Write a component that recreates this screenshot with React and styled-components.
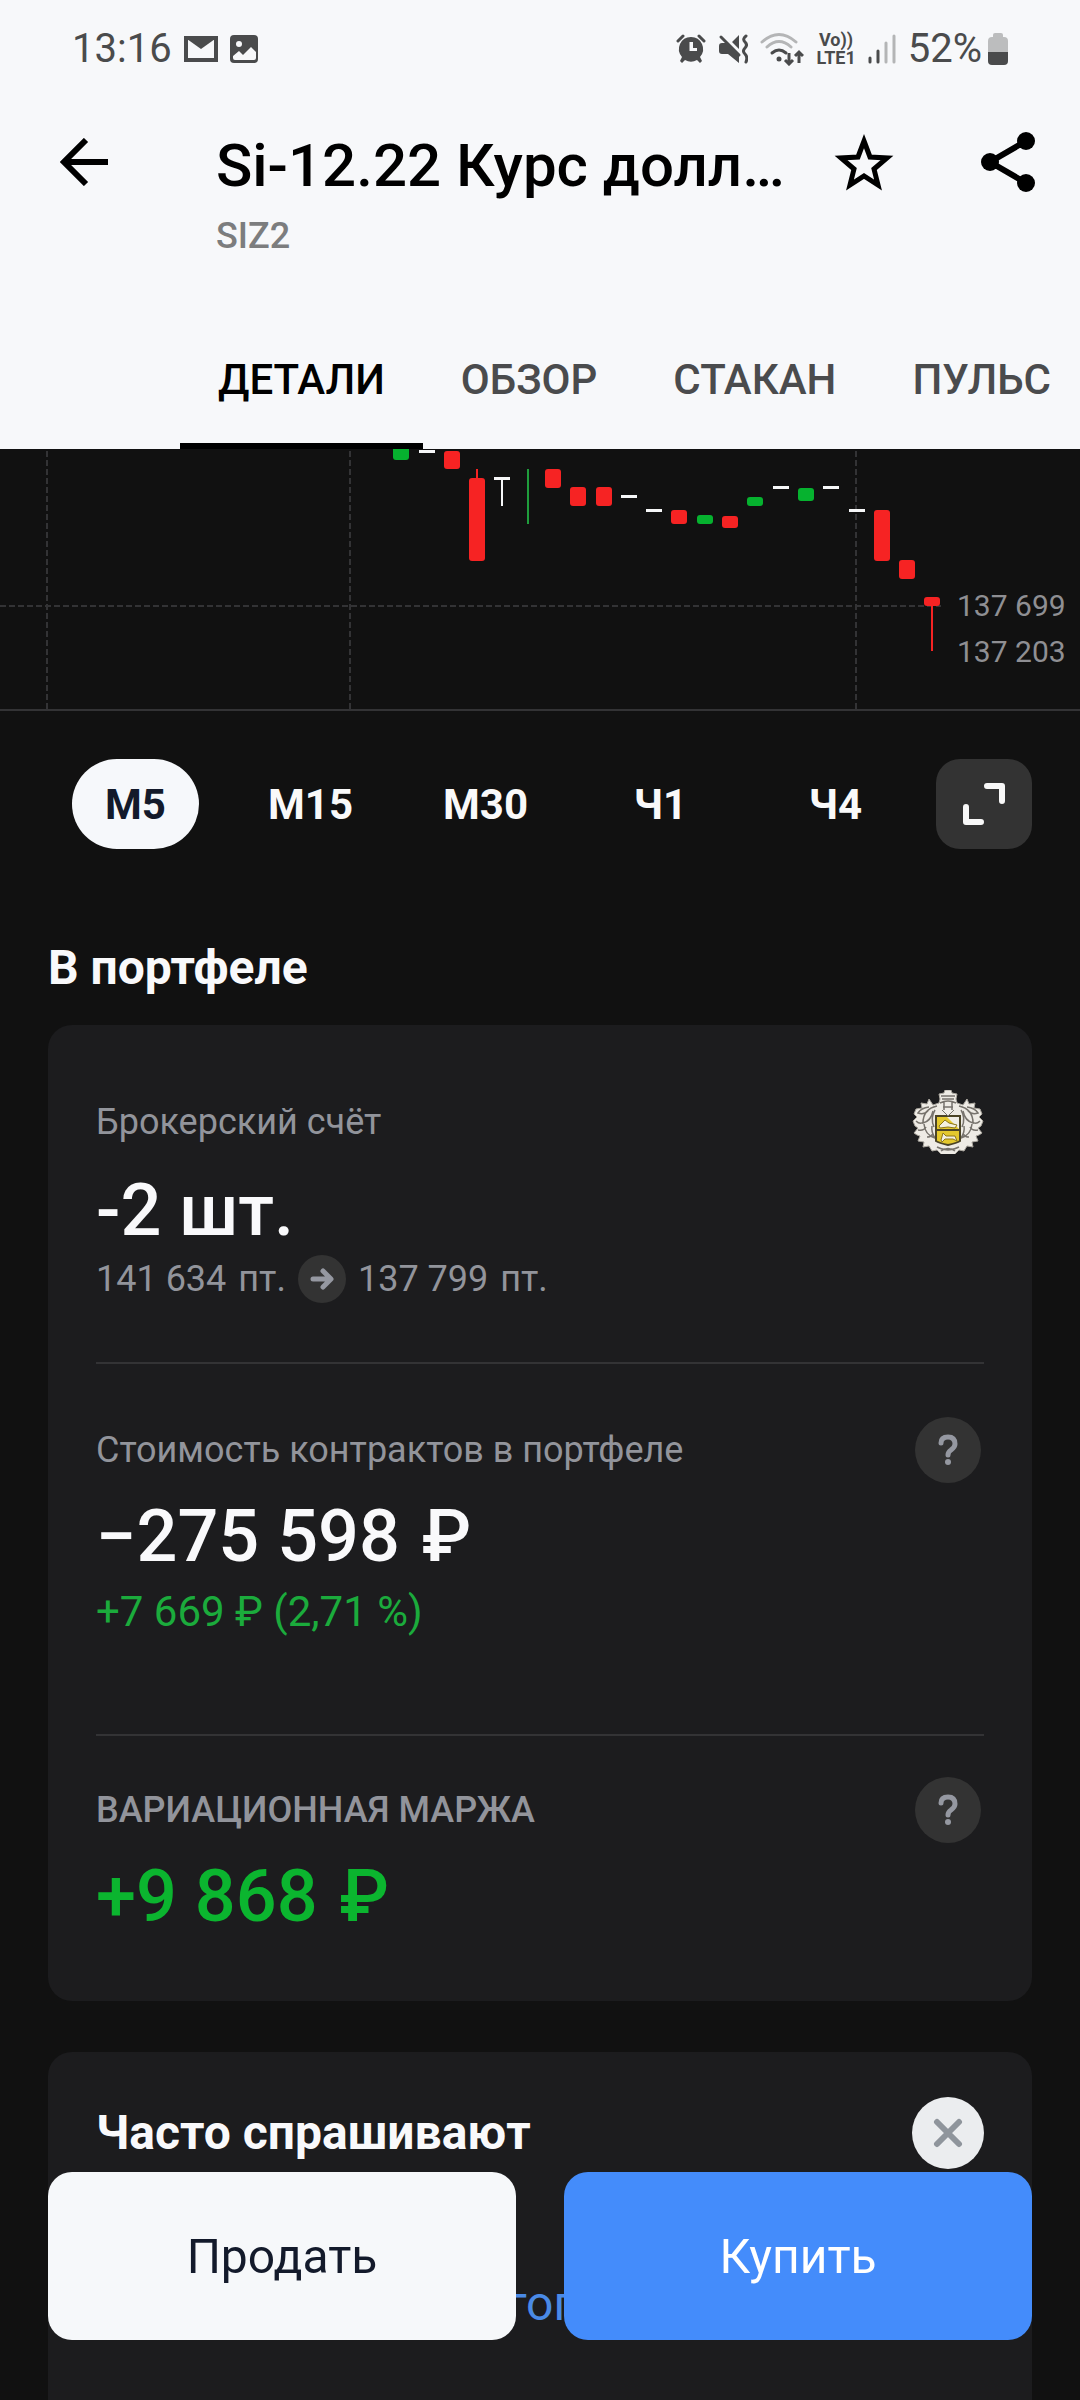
import React, { useState } from "react";
import styled, { createGlobalStyle } from "styled-components";

const tabs = ["ДЕТАЛИ", "ОБЗОР", "СТАКАН", "ПУЛЬС"];
const timeframes = ["М5", "М15", "М30", "Ч1", "Ч4"];

// [x, body top, body bottom, kind, wick top, wick bottom]
const candles = [
  [401, -6, 11, "up"],
  [427, 2, 2, "flat"],
  [452, 2, 20, "down"],
  [477, 29, 112, "down", 20, 29],
  [502, 29, 29, "flat", 29, 57],
  [528, 20, 20, "wick", 20, 75],
  [553, 20, 39, "down"],
  [578, 38, 57, "down"],
  [604, 38, 57, "down"],
  [629, 47, 47, "flat"],
  [654, 61, 61, "flat"],
  [679, 61, 75, "down"],
  [705, 66, 75, "up"],
  [730, 67, 79, "down"],
  [755, 48, 57, "up"],
  [781, 38, 38, "flat"],
  [806, 39, 52, "up"],
  [831, 38, 38, "flat"],
  [857, 61, 61, "flat"],
  [882, 61, 112, "down"],
  [907, 111, 130, "down"],
  [932, 148, 157, "down", 157, 202],
];

const candleColors = {
  up: "#06b22f",
  wick: "#1f9d3c",
  down: "#f62323",
  flat: "#f6f7f8",
};

const CandleChart = () => (
  <ChartSvg viewBox="0 0 1080 260" role="img" aria-label="График цены">
    <g stroke="#333335" strokeWidth="2" strokeDasharray="6 3">
      <path d="M47 2V260M350 2V260M856 2V260M0 157H941" />
    </g>
    {candles.map(([x, top, bottom, kind, wickTop, wickBottom]) => (
      <g key={x} fill={candleColors[kind]}>
        {wickBottom && (
          <rect x={x - 1} y={wickTop} width="2" height={wickBottom - wickTop} />
        )}
        {kind === "flat" && <rect x={x - 8} y={top - 1} width="16" height="3" />}
        {(kind === "up" || kind === "down") && (
          <rect x={x - 8} y={top} width="16" height={bottom - top} rx="3" />
        )}
      </g>
    ))}
    <PriceText x="957" y="167">
      137 699
    </PriceText>
    <PriceText x="957" y="213">
      137 203
    </PriceText>
  </ChartSvg>
);

const StatusIcons = () => (
  <StatusGroup>
    {/* alarm */}
    <svg width="30" height="30" viewBox="0 0 30 30" fill="#4a4b4c">
      <path
        fillRule="evenodd"
        d="M15 3a12 12 0 0 1 9 20l2 4-2 2-3-3a12 12 0 0 1-12 0l-3 3-2-2 2-4A12 12 0 0 1 15 3zM13.500 8v9H21v-3h-4V8z"
      />
      <path
        d="M2 7l5-5M28 7l-5-5"
        stroke="#4a4b4c"
        strokeWidth="3"
        strokeLinecap="round"
      />
    </svg>
    {/* muted speaker */}
    <svg width="30" height="30" viewBox="0 0 30 30" fill="#4a4b4c">
      <path d="M1 12q0-3 3-3h4l13 13v7L10 20H4q-3 0-3-3zM21 1v14l-7-7z" />
      <g fill="none" stroke="#4a4b4c" strokeWidth="3" strokeLinecap="round">
        <path d="M3 3l18 18" />
        <path d="M28 2q-4 3-1 6t0 6 0 6 1 8" />
      </g>
    </svg>
    {/* wifi */}
    <svg width="44" height="34" viewBox="0 0 44 34" fill="none">
      <g strokeWidth="3" strokeLinecap="round">
        <path d="M2 10q17-15 34 0M7 15q12-11 24 0" stroke="#b4b5b6" />
        <path d="M12 21q7-6 14 0" stroke="#4a4b4c" />
      </g>
      <circle cx="19" cy="27" r="2.500" fill="#4a4b4c" />
      <path
        d="M29 21v11m-4-4l4 4 4-4M39 31V20m-4 4l4-4 4 4"
        stroke="#4a4b4c"
        strokeWidth="3"
      />
    </svg>
    <Volte>
      <span>Vo))</span>
      <span>LTE1</span>
    </Volte>
    {/* signal */}
    <svg width="28" height="30" viewBox="0 0 28 30">
      <g strokeWidth="3" strokeLinecap="round">
        <path d="M2 24v4M10 17v11" stroke="#4a4b4c" />
        <path d="M18 9v19M26 2v26" stroke="#b4b5b6" />
      </g>
    </svg>
    <Battery>
      <StatusText>52%</StatusText>
      <svg width="20" height="32" viewBox="0 0 20 32">
        <path
          d="M5 2q0-2 2-2h6q2 0 2 2v2h1q4 0 4 4v11H0V8q0-4 4-4h1z"
          fill="#bcbdbe"
        />
        <path d="M0 19h20v9q0 4-4 4H4q-4 0-4-4z" fill="#4a4b4c" />
      </svg>
    </Battery>
  </StatusGroup>
);

const MailIcon = () => (
  <svg width="34" height="28" viewBox="0 0 34 28">
    <path
      d="M2 3h30v22H2z"
      fill="none"
      stroke="#4a4b4c"
      strokeWidth="4"
    />
    <path d="M3 2h28v2L17 14 3 4z" fill="#4a4b4c" />
  </svg>
);

const PictureIcon = () => (
  <svg width="28" height="28" viewBox="0 0 28 28">
    <rect width="28" height="28" rx="4" fill="#4a4b4c" />
    <circle cx="9" cy="9" r="3" fill="#f7f8fa" />
    <path d="M3 21l6-5 4 4 8-8 5 5v6q0 2-2 2H5q-2 0-2-2z" fill="#f7f8fa" />
  </svg>
);

const Crest = () => (
  <svg width="72" height="64" viewBox="0 0 72 64" role="img" aria-label="Герб">
    <path
      d="M27 4l5-1 1-3h6l1 3 5 1-1 5 1 4 6 2 4-6 2 5 6-1-1 5 6 1 2 5-3 3 4 4-2 5-3 2 4 5-3 2-3 1 2 5-6 1 1 5-6-1-3 5-5-1-5 5-6 2-6-2-5-5-5 1-3-5-6 1 1-5-6-1 2-5-3-1-3-2 4-5-3-2-2-5 4-4-3-3 2-5 6-1-1-5 6 1 2-5 4 6 6-2 1-4z"
      fill="#eeebe5"
      stroke="#aaa69e"
      strokeWidth="1"
    />
    <g fill="none" stroke="#77736d" strokeWidth="1.500">
      <path d="M29 6h14M30 9h12M28 13q8-4 16 0M31 17h10M32 12v8M40 12v8" />
      <path d="M25 16q-14 3-14 17 8-2 10-12M47 16q14 3 14 17-8-2-10-12" />
      <path d="M17 17q-8 1-11 6 6 2 10-2M55 17q8 1 11 6-6 2-10-2" />
      <path d="M12 34q1 11 11 14-4-6-3-12M60 34q-1 11-11 14 4-6 3-12" />
      <path d="M4 31q4 4 8 1M68 31q-4 4-8 1M6 40q6 1 8-3M66 40q-6 1-8-3" />
      <path d="M15 47q4 0 6-3M57 47q-4 0-6-3M25 57q11 6 22 0M29 61q7-5 14 0" />
      <path d="M23 20q-5 8-1 17M49 20q5 8 1 17" />
    </g>
    <path d="M24 26h24v25q-3 2-12 4-9-2-12-4z" fill="#e4c82d" />
    <path d="M35 27h12v12z" fill="#f0ede6" />
    <path
      d="M27 36l6-6 4 3 8 2-2 3-7-1-8 1zM29 50l2-7 3 3h9l2 5-4-2h-8l-3 3z"
      fill="#f4f0df"
      stroke="#8c7519"
      strokeWidth="1"
    />
    <path
      d="M24 26h24v25q-3 2-12 4-9-2-12-4zM24 40h24"
      fill="none"
      stroke="#4b4426"
      strokeWidth="2"
    />
    <path d="M30 20l6 6 6-6" fill="#f2efe9" stroke="#77736d" />
  </svg>
);

const HelpButton = () => (
  <RoundButton type="button" aria-label="Справка">
    <svg width="24" height="32" viewBox="0 0 24 32" fill="none">
      <path
        d="M5 9q0-6 7-6t7 7q0 3-4 6-3 2-3 5"
        stroke="#9598a1"
        strokeWidth="5"
        strokeLinecap="round"
      />
      <circle cx="12" cy="28" r="3" fill="#9598a1" />
    </svg>
  </RoundButton>
);

const App = () => {
  const [tab, setTab] = useState("ДЕТАЛИ");
  const [timeframe, setTimeframe] = useState("М5");

  return (
    <Page>
      <GlobalStyle />
      <Header>
        <StatusBar>
          <StatusGroup>
            <StatusText>13:16</StatusText>
            <MailIcon />
            <PictureIcon />
          </StatusGroup>
          <StatusIcons />
        </StatusBar>

        <AppBar>
          <BackButton type="button" aria-label="Назад">
            <svg width="48" height="48" viewBox="0 0 48 48" fill="none">
              <path d="M48 24H5M26 2L4 24l22 22" stroke="#000" strokeWidth="6" />
            </svg>
          </BackButton>
          <TitleBlock>
            <Title>Si-12.22 Курс долл…</Title>
            <Ticker>SIZ2</Ticker>
          </TitleBlock>
          <BarButton type="button" aria-label="В избранное">
            <svg width="64" height="64" viewBox="0 0 64 64" fill="none">
              <path
                d="M32 11l6 16 17 1-13 11 4 16-14-9-14 9 4-16L9 28l17-1z"
                stroke="#000"
                strokeWidth="5"
              />
            </svg>
          </BarButton>
          <BarButton type="button" aria-label="Поделиться">
            <svg width="64" height="64" viewBox="0 0 64 64">
              <path
                d="M50 11L14 32l36 21"
                fill="none"
                stroke="#000"
                strokeWidth="6"
              />
              <circle cx="50" cy="11" r="9" />
              <circle cx="14" cy="32" r="9" />
              <circle cx="50" cy="53" r="9" />
            </svg>
          </BarButton>
        </AppBar>

        <Tabs>
          {tabs.map((name) => (
            <Tab
              key={name}
              type="button"
              $active={name === tab}
              onClick={() => setTab(name)}
            >
              {name}
            </Tab>
          ))}
        </Tabs>
      </Header>

      <ChartSection>
        <CandleChart />
      </ChartSection>

      <TimeframeBar>
        <TimeframeList>
          {timeframes.map((name) => (
            <Timeframe
              key={name}
              type="button"
              $active={name === timeframe}
              onClick={() => setTimeframe(name)}
            >
              {name}
            </Timeframe>
          ))}
        </TimeframeList>
        <ExpandButton type="button" aria-label="На весь экран">
          <svg width="42" height="42" viewBox="0 0 42 42" fill="none">
            <path
              d="M24 3h15v15M3 24v15h15"
              stroke="#f9f9f9"
              strokeWidth="6"
              strokeLinecap="round"
              strokeLinejoin="round"
            />
          </svg>
        </ExpandButton>
      </TimeframeBar>

      <SectionTitle>В портфеле</SectionTitle>

      <Card>
        <Position>
          <Row>
            <Label>Брокерский счёт</Label>
            <Crest />
          </Row>
          <Value>-2 шт.</Value>
          <PriceRow>
            <PricePart>
              <span>141 634</span>
              <span>пт.</span>
            </PricePart>
            <ArrowBadge>
              <svg width="24" height="24" viewBox="0 0 24 24" fill="none">
                <path
                  d="M3 12h17M13 4l8 8-8 8"
                  stroke="#9598a1"
                  strokeWidth="5"
                  strokeLinecap="round"
                  strokeLinejoin="round"
                />
              </svg>
            </ArrowBadge>
            <PricePart>
              <span>137 799</span>
              <span>пт.</span>
            </PricePart>
          </PriceRow>
        </Position>

        <Contracts>
          <Row>
            <Label>Стоимость контрактов в портфеле</Label>
            <HelpButton />
          </Row>
          <Value>
            −275 598 <Currency>₽</Currency>
          </Value>
          <Change>+7 669 ₽ (2,71 %)</Change>
        </Contracts>

        <Margin>
          <Row>
            <Label $strong>ВАРИАЦИОННАЯ МАРЖА</Label>
            <HelpButton />
          </Row>
          <Value $positive>
            +9 868 <Currency>₽</Currency>
          </Value>
        </Margin>
      </Card>

      <FaqCard>
        <Row>
          <FaqTitle>Часто спрашивают</FaqTitle>
          <CloseButton type="button" aria-label="Закрыть">
            <svg width="30" height="30" viewBox="0 0 30 30">
              <path
                d="M4 4l22 22M26 4L4 26"
                stroke="#8f959c"
                strokeWidth="6"
                strokeLinecap="round"
              />
            </svg>
          </CloseButton>
        </Row>
        <FaqLink href="#faq">гог</FaqLink>
      </FaqCard>

      <TradeBar>
        <TradeButton type="button">Продать</TradeButton>
        <TradeButton type="button" $primary>
          Купить
        </TradeButton>
      </TradeBar>
    </Page>
  );
};

const GlobalStyle = createGlobalStyle`
  * {
    box-sizing: border-box;
  }
  body {
    margin: 0;
    background: #111111;
    font-family: Roboto, "Liberation Sans", sans-serif;
  }
  button {
    padding: 0;
    border: none;
    background: none;
    font-family: inherit;
    cursor: pointer;
  }
  svg {
    display: block;
    flex-shrink: 0;
  }
`;

const Page = styled.div`
  display: flex;
  flex-direction: column;
  min-height: 100vh;
  background: #111111;
  color: #f9f9fb;
`;

const Header = styled.header`
  background: #f7f8fa;
  color: #000000;
`;

const StatusBar = styled.div`
  display: flex;
  align-items: center;
  justify-content: space-between;
  height: 98px;
  padding: 0 72px;
`;

const StatusGroup = styled.div`
  display: flex;
  align-items: center;
  gap: 12px;
`;

const Battery = styled.div`
  display: flex;
  align-items: center;
  gap: 6px;
`;

const StatusText = styled.span`
  color: #4a4b4c;
  font-size: 40px;
  line-height: 48px;
`;

const Volte = styled.span`
  display: flex;
  flex-direction: column;
  align-items: center;
  color: #4a4b4c;
  font-size: 18px;
  font-weight: 700;
  line-height: 18px;
`;

const AppBar = styled.div`
  display: flex;
  align-items: flex-start;
  padding: 32px 40px 51px 60px;
`;

const BarButton = styled.button`
  display: flex;
  flex-shrink: 0;
  align-items: center;
  justify-content: center;
  width: 64px;
  height: 64px;

  & + & {
    margin-left: 80px;
  }
`;

const BackButton = styled(BarButton)`
  width: 48px;
  margin-right: 108px;
`;

const TitleBlock = styled.div`
  flex: 1;
  min-width: 0;
  margin-right: 32px;
`;

const Title = styled.h1`
  margin: 0 0 12px;
  overflow: hidden;
  font-size: 60px;
  font-weight: 500;
  line-height: 72px;
  text-overflow: ellipsis;
  white-space: nowrap;
`;

const Ticker = styled.div`
  color: #7c7d7e;
  font-size: 36px;
  font-weight: 500;
  line-height: 44px;
`;

const Tabs = styled.nav`
  display: flex;
  padding-left: 180px;
  overflow: hidden;
`;

const Tab = styled.button`
  flex-shrink: 0;
  height: 140px;
  padding: 0 38px;
  box-shadow: ${({ $active }) => ($active ? "inset 0 -6px #000000" : "none")};
  color: ${({ $active }) => ($active ? "#000000" : "#4a4b4d")};
  font-size: 42px;
  font-weight: 500;
`;

const ChartSection = styled.section`
  border-bottom: 2px solid #333335;
`;

const ChartSvg = styled.svg`
  width: 100%;
  height: auto;
`;

const PriceText = styled.text`
  fill: #8f8f93;
  font-size: 30px;
`;

const TimeframeBar = styled.div`
  display: flex;
  align-items: center;
  gap: 13px;
  padding: 48px 48px 0;
`;

const TimeframeList = styled.div`
  display: flex;
  flex: 1;
`;

const Timeframe = styled.button`
  flex: 1;
  height: 90px;
  margin: 0 24px;
  border-radius: 45px;
  background: ${({ $active }) => ($active ? "#f6f8fb" : "transparent")};
  color: ${({ $active }) => ($active ? "#131a2b" : "#f9f9f9")};
  font-size: 42px;
  font-weight: 700;
  white-space: nowrap;
`;

const ExpandButton = styled.button`
  display: flex;
  align-items: center;
  justify-content: center;
  width: 96px;
  height: 90px;
  border-radius: 24px;
  background: #333333;
`;

const SectionTitle = styled.h2`
  margin: 91px 48px 29px;
  font-size: 48px;
  font-weight: 700;
  line-height: 56px;
`;

const Card = styled.section`
  margin: 0 48px;
  padding: 0 48px;
  border-radius: 24px;
  background: #1c1c1e;
`;

const Position = styled.div`
  padding: 61px 0 59px;
  border-bottom: 2px solid #333335;
`;

const Contracts = styled.div`
  padding: 50px 0 96px;
  border-bottom: 2px solid #333335;
`;

const Margin = styled.div`
  padding: 38px 0 62px;
`;

const Row = styled.div`
  display: flex;
  align-items: center;
  justify-content: space-between;
  min-height: 72px;
`;

const Label = styled.span`
  color: #92949b;
  font-size: 36px;
  font-weight: ${({ $strong }) => ($strong ? 500 : 400)};
  line-height: 44px;
`;

const Value = styled.div`
  margin-top: 9px;
  color: ${({ $positive }) => ($positive ? "#0bb52f" : "#f9f9fb")};
  font-size: 72px;
  font-weight: 500;
  line-height: 84px;

  ${Position} & {
    margin-top: 11px;
  }
`;

const Currency = styled.span`
  margin-left: 4px;
`;

const PriceRow = styled.div`
  display: flex;
  align-items: center;
  gap: 12px;
  margin-top: 2px;
  color: #92949b;
  font-size: 36px;
  line-height: 48px;
`;

const PricePart = styled.span`
  display: flex;
  gap: 12px;
`;

const ArrowBadge = styled.span`
  display: flex;
  align-items: center;
  justify-content: center;
  width: 48px;
  height: 48px;
  border-radius: 50%;
  background: #333333;
`;

const Change = styled.div`
  margin-top: 7px;
  color: #1bab3c;
  font-size: 42px;
  line-height: 52px;
`;

const RoundButton = styled.button`
  display: flex;
  align-items: center;
  justify-content: center;
  width: 66px;
  height: 66px;
  margin-right: 3px;
  border-radius: 50%;
  background: #333333;
`;

const FaqCard = styled.section`
  display: flex;
  flex: 1;
  flex-direction: column;
  margin: 51px 48px 0;
  padding: 45px 48px 0;
  border-radius: 24px 24px 0 0;
  background: #1c1c1e;
`;

const FaqTitle = styled.h2`
  margin: 0;
  font-size: 48px;
  font-weight: 700;
  line-height: 56px;
`;

const CloseButton = styled(RoundButton)`
  width: 72px;
  height: 72px;
  margin-right: 0;
  background: #ebedef;
`;

const FaqLink = styled.a`
  margin-top: 107px;
  color: #4a8ae6;
  font-size: 48px;
  line-height: 56px;
  text-align: center;
  text-decoration: none;
`;

// Stays above the scrolling content
const TradeBar = styled.div`
  position: fixed;
  right: 48px;
  bottom: 60px;
  left: 48px;
  display: flex;
  gap: 48px;
`;

const TradeButton = styled.button`
  flex: 1;
  height: 168px;
  border-radius: 24px;
  background: ${({ $primary }) => ($primary ? "#448cfb" : "#f6f8fa")};
  color: ${({ $primary }) => ($primary ? "#ffffff" : "#131a2b")};
  font-size: 48px;
`;

export default App;
